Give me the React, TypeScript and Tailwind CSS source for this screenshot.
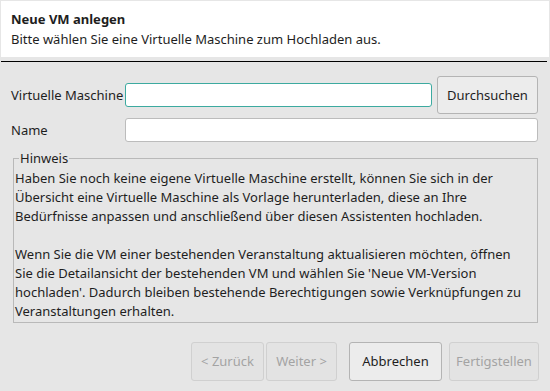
import React from "react";

const hint1 = [
  "Haben Sie noch keine eigene Virtuelle Maschine erstellt, können Sie sich in der",
  "Übersicht eine Virtuelle Maschine als Vorlage herunterladen, diese an Ihre",
  "Bedürfnisse anpassen und anschließend über diesen Assistenten hochladen.",
];

const hint2 = [
  "Wenn Sie die VM einer bestehenden Veranstaltung aktualisieren möchten, öffnen",
  "Sie die Detailansicht der bestehenden VM und wählen Sie 'Neue VM-Version",
  "hochladen'. Dadurch bleiben bestehende Berechtigungen sowie Verknüpfungen zu",
  "Veranstaltungen erhalten.",
];

function WizardButton({ label, disabled, className }: { label: string; disabled?: boolean; className: string }) {
  return (
    <button
      disabled={disabled}
      className={
        "h-[39px] rounded-[3px] border text-[13px] " +
        (disabled
          ? "border-[#d0d0d0] bg-[#e3e3e3] text-[#a3a3a3] "
          : "border-[#b4b4b4] bg-[#ececec] text-[#1e1e1e] ") +
        className
      }
    >
      {label}
    </button>
  );
}

export default function App() {
  return (
    <div
      className="w-[550px] h-[391px] bg-[#e6e6e6] text-[#1e1e1e] text-[13px] leading-[19px] overflow-hidden"
      style={{ fontFamily: '"Noto Sans", "DejaVu Sans", sans-serif' }}
    >
      {/* Header */}
      <div className="mx-[1px] mt-[1px] h-[56px] bg-white pl-[10px] pt-[8px]">
        <div className="font-bold leading-[20px]">Neue VM anlegen</div>
        <div className="leading-[20px]">Bitte wählen Sie eine Virtuelle Maschine zum Hochladen aus.</div>
      </div>
      <div className="mx-[1px] mt-[4px] mr-[3px] h-px bg-black" />

      {/* Form */}
      <div className="mt-[14px] pl-[11px] pr-[12px]">
        <div className="flex items-center h-[38px]">
          <span className="w-[114px] shrink-0">Virtuelle Maschine</span>
          <input className="h-[24px] w-[307px] rounded-[3px] border border-[#3daaa0] bg-white outline-none" />
          <button className="ml-[5px] h-[38px] w-[101px] rounded-[3px] border border-[#b4b4b4] bg-[#ececec]">
            Durchsuchen
          </button>
        </div>
        <div className="flex items-center mt-[4px] h-[24px]">
          <span className="w-[114px] shrink-0">Name</span>
          <input className="h-[24px] flex-1 rounded-[3px] border border-[#bcbcbc] bg-white outline-none" />
        </div>

        {/* Hinweis group */}
        <fieldset className="mt-[8px] ml-[2px] mr-[0px] border border-[#b9b9b9] pl-[1px] pb-[1px]">
          <legend className="ml-[4px] px-[1px] leading-[16px]">Hinweis</legend>
          <div className="mt-[3px]">
            {hint1.map((l) => (
              <div key={l} className="whitespace-nowrap">{l}</div>
            ))}
            <div className="h-[19px]" />
            {hint2.map((l) => (
              <div key={l} className="whitespace-nowrap">{l}</div>
            ))}
          </div>
        </fieldset>
      </div>

      {/* Buttons */}
      <div className="mt-[19px] flex pl-[191px]">
        <WizardButton label="< Zurück" disabled className="w-[73px]" />
        <WizardButton label="Weiter >" disabled className="ml-[2px] w-[71px]" />
        <WizardButton label="Abbrechen" className="ml-[12px] w-[93px]" />
        <WizardButton label="Fertigstellen" disabled className="ml-[7px] w-[90px]" />
      </div>
    </div>
  );
}
